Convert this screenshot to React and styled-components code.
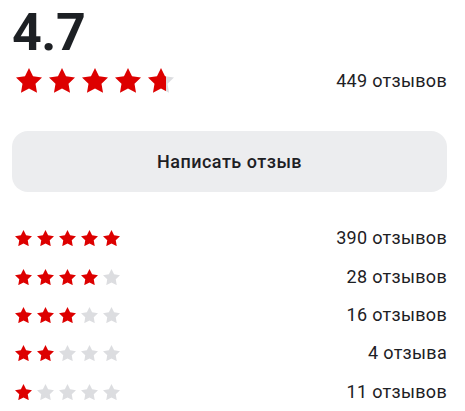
import React from 'react';
import styled, { createGlobalStyle } from 'styled-components';

const GlobalStyle = createGlobalStyle`
  html, body {
    margin: 0;
    padding: 0;
    background: #ffffff;
  }
  body {
    font-family: Roboto, "Liberation Sans", Arial, sans-serif;
    color: #1d2024;
  }
`;

const RED = '#dd0000';
const GREY = '#dcdde0';

const Wrapper = styled.div`
  display: flex;
  flex-direction: column;
  padding: 7px 18px 0 12px;
`;

const Score = styled.div`
  font-size: 52px;
  line-height: 52px;
  font-weight: 700;
  letter-spacing: -0.5px;
`;

const Summary = styled.div`
  display: flex;
  align-items: center;
  justify-content: space-between;
  margin-top: 8px;
  height: 27px;
`;

const StarLine = styled.div`
  display: flex;
  align-items: center;
  gap: ${props => props.gap}px;
  padding-left: ${props => props.offset}px;
`;

const Count = styled.span`
  font-size: 18px;
  line-height: 22px;
  letter-spacing: 0.3px;
  color: #1d2024;
`;

const WriteButton = styled.button`
  margin-top: 37px;
  height: 61px;
  border: none;
  border-radius: 16px;
  background: #ecedef;
  font-family: inherit;
  font-size: 18px;
  font-weight: 500;
  letter-spacing: 0.5px;
  color: #1d2024;
  cursor: pointer;
`;

const List = styled.div`
  display: grid;
  grid-auto-rows: 38.4px;
  margin-top: 27px;
`;

const Row = styled.div`
  display: flex;
  align-items: center;
  justify-content: space-between;
`;

const STAR_POINTS = '10,0 13.09,6.26 20,7.27 15,12.14 16.18,19.02 10,15.77 3.82,19.02 5,12.14 0,7.27 6.91,6.26';

const Star = ({ size, fill = 1, id }) => (
  <svg width={size} height={size * 19.02 / 20} viewBox="0 0 20 19.02">
    {fill > 0 && fill < 1 && (
      <defs>
        <linearGradient id={id} x1="0" x2="1" y1="0" y2="0">
          <stop offset={fill} stopColor={RED} />
          <stop offset={fill} stopColor={GREY} />
        </linearGradient>
      </defs>
    )}
    <polygon
      points={STAR_POINTS}
      fill={fill >= 1 ? RED : fill <= 0 ? GREY : `url(#${id})`}
    />
  </svg>
);

const Stars = ({ value, size, gap, offset }) => (
  <StarLine gap={gap} offset={offset}>
    {[0, 1, 2, 3, 4].map(i => (
      <Star key={i} size={size} fill={Math.max(0, Math.min(1, value - i))} id={`star-part-${i}`} />
    ))}
  </StarLine>
);

const breakdown = [
  { stars: 5, label: '390 отзывов' },
  { stars: 4, label: '28 отзывов' },
  { stars: 3, label: '16 отзывов' },
  { stars: 2, label: '4 отзыва' },
  { stars: 1, label: '11 отзывов' },
];

export default function App() {
  return (
    <Wrapper>
      <GlobalStyle />
      <Score>4.7</Score>
      <Summary>
        <Stars value={4.7} size={26} gap={7} offset={4} />
        <Count>449 отзывов</Count>
      </Summary>
      <WriteButton>Написать отзыв</WriteButton>
      <List>
        {breakdown.map(item => (
          <Row key={item.stars}>
            <Stars value={item.stars} size={17} gap={5} offset={3} />
            <Count>{item.label}</Count>
          </Row>
        ))}
      </List>
    </Wrapper>
  );
}
